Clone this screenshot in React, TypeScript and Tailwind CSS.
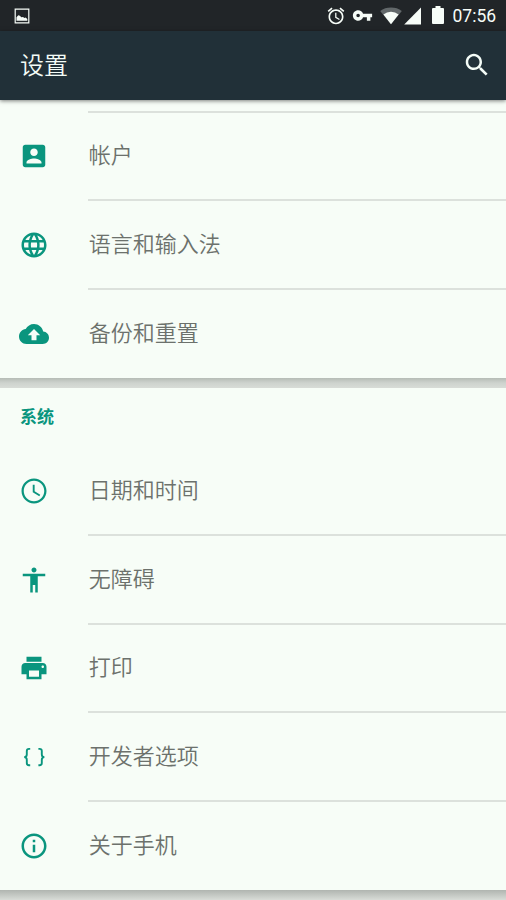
import React from 'react';

interface IconProps {
  d: string;
  className?: string;
}

interface Item {
  label: string;
  icon: string;
}

const ICONS = {
  account:
    'M3 5v14c0 1.1.89 2 2 2h14c1.1 0 2-.9 2-2V5c0-1.1-.9-2-2-2H5c-1.11 0-2 .9-2 2zm12 4c0 1.66-1.34 3-3 3s-3-1.34-3-3 1.34-3 3-3 3 1.34 3 3zm-9 8c0-2 4-3.1 6-3.1s6 1.1 6 3.1v1H6v-1z',
  language:
    'M11.99 2C6.47 2 2 6.48 2 12s4.47 10 9.99 10C17.52 22 22 17.52 22 12S17.52 2 11.99 2zm6.93 6h-2.95c-.32-1.25-.78-2.45-1.38-3.56 1.84.63 3.37 1.91 4.33 3.56zM12 4.04c.83 1.2 1.48 2.53 1.91 3.96h-3.82c.43-1.43 1.08-2.76 1.91-3.96zM4.26 14C4.1 13.36 4 12.69 4 12s.1-1.36.26-2h3.38c-.08.66-.14 1.32-.14 2s.06 1.34.14 2H4.26zm.82 2h2.95c.32 1.25.78 2.45 1.38 3.56-1.84-.63-3.37-1.9-4.33-3.56zm2.95-8H5.08c.96-1.66 2.49-2.93 4.33-3.56C8.81 5.55 8.35 6.75 8.03 8zM12 19.96c-.83-1.2-1.48-2.53-1.91-3.96h3.82c-.43 1.43-1.08 2.76-1.91 3.96zM14.34 14H9.66c-.09-.66-.16-1.32-.16-2s.07-1.35.16-2h4.68c.09.65.16 1.32.16 2s-.07 1.34-.16 2zm.25 5.56c.6-1.11 1.06-2.31 1.38-3.56h2.95c-.96 1.65-2.49 2.93-4.33 3.56zM16.36 14c.08-.66.14-1.32.14-2s-.06-1.34-.14-2h3.38c.16.64.26 1.31.26 2s-.1 1.36-.26 2h-3.38z',
  backup:
    'M19.35 10.04C18.67 6.59 15.64 4 12 4 9.11 4 6.6 5.64 5.35 8.04 2.34 8.36 0 10.91 0 14c0 3.31 2.69 6 6 6h13c2.76 0 5-2.24 5-5 0-2.64-2.05-4.78-4.65-4.96zM14 13v4h-4v-4H7l5-5 5 5h-3z',
  clock:
    'M11.99 2C6.47 2 2 6.48 2 12s4.47 10 9.99 10C17.52 22 22 17.52 22 12S17.52 2 11.99 2zM12 20.2c-4.53 0-8.2-3.67-8.2-8.2S7.47 3.8 12 3.8s8.2 3.67 8.2 8.2-3.67 8.2-8.2 8.2zM12.5 7H11v6l5.25 3.15.75-1.23-4.5-2.67z',
  accessibility:
    'M12 2c1.1 0 2 .9 2 2s-.9 2-2 2-2-.9-2-2 .9-2 2-2zm9 7h-6v13h-2v-6h-2v6H9V9H3V7h18v2z',
  print:
    'M19 8H5c-1.66 0-3 1.34-3 3v6h4v4h12v-4h4v-6c0-1.66-1.34-3-3-3zm-3 11H8v-5h8v5zm3-7c-.55 0-1-.45-1-1s.45-1 1-1 1 .45 1 1-.45 1-1 1zm-1-9H6v4h12V3z',
  info: 'M11 17h2v-6h-2v6zm1-15C6.48 2 2 6.48 2 12s4.48 10 10 10 10-4.48 10-10S17.52 2 12 2zm0 18c-4.41 0-8-3.59-8-8s3.59-8 8-8 8 3.59 8 8-3.59 8-8 8zM11 9h2V7h-2v2z',
  search:
    'M15.5 14h-.79l-.28-.27C15.41 12.59 16 11.11 16 9.5 16 5.91 13.09 3 9.5 3S3 5.91 3 9.5 5.91 16 9.5 16c1.61 0 3.09-.59 4.23-1.57l.27.28v.79l5 4.99L20.49 19l-4.99-5zm-6 0C7.01 14 5 11.99 5 9.5S7.01 5 9.5 5 14 7.01 14 9.5 11.99 14 9.5 14z',
  alarm:
    'M22 5.72l-4.6-3.86-1.29 1.53 4.6 3.86L22 5.72zM7.88 3.39L6.6 1.86 2 5.71l1.29 1.53 4.59-3.85zM12.5 8H11v6l4.75 2.85.75-1.23-4-2.37V8zM12 4c-4.97 0-9 4.03-9 9s4.02 9 9 9c4.97 0 9-4.03 9-9s-4.03-9-9-9zm0 16c-3.87 0-7-3.13-7-7s3.13-7 7-7 7 3.13 7 7-3.13 7-7 7z',
  key: 'M12.65 10C11.83 7.67 9.61 6 7 6c-3.31 0-6 2.69-6 6s2.69 6 6 6c2.61 0 4.83-1.67 5.65-4H17v4h4v-4h2v-4H12.65zM7 14c-1.1 0-2-.9-2-2s.9-2 2-2 2 .9 2 2-.9 2-2 2z',
  // the braces are stroked, see ItemIcon
  developer: '',
};

const DEVICE_ITEMS: Item[] = [
  { label: '帐户', icon: ICONS.account },
  { label: '语言和输入法', icon: ICONS.language },
  { label: '备份和重置', icon: ICONS.backup },
];

const SYSTEM_ITEMS: Item[] = [
  { label: '日期和时间', icon: ICONS.clock },
  { label: '无障碍', icon: ICONS.accessibility },
  { label: '打印', icon: ICONS.print },
  { label: '开发者选项', icon: ICONS.developer },
  { label: '关于手机', icon: ICONS.info },
];

const Icon = ({ d, className }: IconProps) => (
  <svg viewBox="0 0 24 24" fill="currentColor" fillRule="evenodd" className={className}>
    <path d={d} />
  </svg>
);

const ItemIcon = ({ d }: { d: string }) => {
  if (d) return <Icon d={d} className="mt-[2.5px] size-[30px] shrink-0 text-[#0a957e]" />;
  return (
    <svg
      viewBox="0 0 30 30"
      fill="none"
      stroke="currentColor"
      strokeWidth="1.9"
      className="mt-[2px] size-[30px] shrink-0 text-[#0a957e]"
    >
      <path d="M11.2 6.9H10q-2.2 0-2.2 2.2v3.3q0 2.7-2.6 2.7q2.6 0 2.6 2.7v3.3q0 2.2 2.2 2.2h1.2" />
      <path d="M19.4 6.9h1.2q2.2 0 2.2 2.2v3.3q0 2.7 2.6 2.7q-2.6 0-2.6 2.7v3.3q0 2.2-2.2 2.2h-1.2" />
    </svg>
  );
};

const StatusBar = () => (
  <div className="flex h-[31px] shrink-0 items-center bg-[#212528] text-[#f7fdf8]">
    <svg viewBox="0 0 16 16" className="ml-3.5 size-4">
      <path d="M1.2 1.2h13.6v13.6H1.2z" fill="none" stroke="currentColor" strokeWidth="1.2" />
      <path d="M2.5 12.7V9.3l1.8-2 1.5.4 1.5 1.6 1.8-.3 1.2.9 1.2-.5 1.8 1.6v1.7z" fill="currentColor" />
    </svg>
    <Icon d={ICONS.alarm} className="ml-auto size-5" />
    <Icon d={ICONS.key} className="ml-[6px] size-[21px]" />
    <svg viewBox="0 0 22 18" className="ml-[7px] h-[18px] w-[22px]">
      <path d="M11 17.2L.2 4Q4.8.6 11 .6T21.8 4z" fill="#62686a" />
      <path d="M11 17.2L3.4 7.5Q6.7 4.8 11 4.8t7.6 2.7z" fill="currentColor" />
    </svg>
    <svg viewBox="0 0 18 18" className="ml-[2px] size-[18px]">
      <path d="M17 .6V17.5H.2z" fill="currentColor" />
    </svg>
    <svg viewBox="0 0 12 18" className="mb-px ml-[10.5px] h-[18px] w-3">
      <path d="M3.5 0h5v2H11q1 0 1 1v14q0 1-1 1H1q-1 0-1-1V3q0-1 1-1h2.5z" fill="currentColor" />
    </svg>
    <span className="mt-[2px] mr-[9.5px] ml-[8.5px] w-[44px] font-['Roboto'] text-[17.5px] leading-none">07:56</span>
  </div>
);

const Row = ({ item, divider }: { item: Item; divider: boolean }) => (
  <div className="flex h-[88.7px] items-center pl-[19.2px]">
    <ItemIcon d={item.icon} />
    <div
      className={`ml-auto flex h-full w-[418px] items-center border-t-2 pb-[4.2px] pl-[0.8px] text-[22px] font-[350] text-[#6c716c] ${
        divider ? 'border-[#dce1dc]' : 'border-transparent'
      }`}
    >
      {item.label}
    </div>
  </div>
);

const App = (): React.ReactElement => {
  return (
    <div className="flex h-[900px] w-[506px] flex-col overflow-hidden bg-[#d5d9d4] font-['Noto_Sans_CJK_SC',sans-serif]">
      <StatusBar />
      <header className="relative flex h-[69px] shrink-0 items-center justify-between bg-[#213038] pr-[14.5px] pb-[2px] pl-5 text-[#f4fcf7] shadow-[0_1px_4px_rgba(0,0,0,0.5)]">
        <h1 className="pb-[2px] text-2xl leading-none font-[350]">设置</h1>
        <Icon d={ICONS.search} className="size-[30px]" />
      </header>
      <section className="h-[278px] shrink-0 bg-[#f7fdf7] pt-[10.7px]">
        {DEVICE_ITEMS.map((item) => (
          <Row key={item.label} item={item} divider />
        ))}
      </section>
      <div className="h-[10px] shrink-0 bg-linear-to-b from-[#b6bcb6] via-[#ced3ce] to-[#d8dcd7]" />
      <section className="h-[502px] shrink-0 bg-[#f7fdf7]">
        <h2 className="flex h-[57.3px] items-center pb-px pl-5 text-[17px] font-bold text-[#0a957e]">系统</h2>
        {SYSTEM_ITEMS.map((item, i) => (
          <Row key={item.label} item={item} divider={i > 0} />
        ))}
      </section>
      <div className="h-[10px] shrink-0 bg-linear-to-b from-[#b0b5b0] to-[#d8dcd7]" />
    </div>
  );
};

export default App;
